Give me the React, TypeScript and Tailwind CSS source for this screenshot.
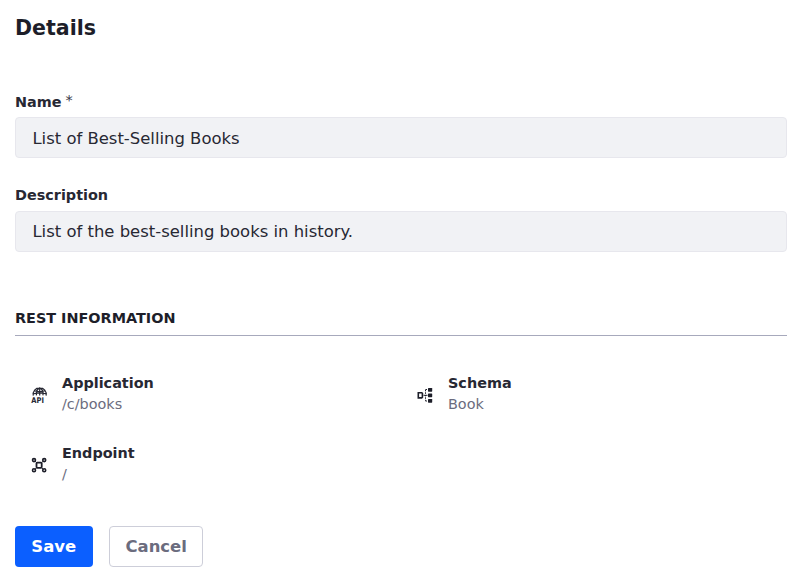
import type { ReactNode } from "react";

function ApiIcon() {
  return (
    <svg width="17" height="17" viewBox="0 0 17 17" fill="none" stroke="#272833" strokeWidth="1.2" className="overflow-visible">
      <path d="M2.300 8.700C1.500 4 4.500 .9 8.700 .9s7.200 3.100 6.400 7.800M8.700 .9v7.500M5.500 8.400C4.800 5 6.500 2 8.700 .9c2.200 1.100 3.900 4.100 3.200 7.500M3.200 3.700c3.500 1.100 7.500 1.100 11 0M2 7c4-1.300 9.400-1.300 13.400 0" />
      <text x="0.300" y="16" fontSize="7.800" fontWeight="700" fontFamily="DejaVu Sans, sans-serif" fill="#272833" stroke="none" textLength="12.600" lengthAdjust="spacingAndGlyphs">API</text>
    </svg>
  );
}

function SchemaIcon() {
  return (
    <svg width="17" height="17" viewBox="0 0 17 17" fill="none" stroke="#1d1e29">
      <path d="M1.300 5.700h3.400l.7.7v3.800l-.7.700H1.300z" strokeWidth="1.600" />
      <path d="M6.500 8.300H11M8.500 2.800v11M8.500 2.500h2.500M8.500 14h2.500" strokeDasharray="1.500 1" strokeWidth="1" />
      <rect x="11" y="0.900" width="4.200" height="3.800" rx="0.600" fill="#1d1e29" stroke="none" />
      <rect x="11" y="6.400" width="4.200" height="3.800" rx="0.600" fill="#1d1e29" stroke="none" />
      <rect x="11" y="11.900" width="4.200" height="3.800" rx="0.600" fill="#1d1e29" stroke="none" />
    </svg>
  );
}

function EndpointIcon() {
  return (
    <svg width="17" height="17" viewBox="0 0 17 17" fill="none" stroke="#1d1e29" strokeWidth="1.600">
      <rect x="5.500" y="5.600" width="5.200" height="5.200" rx="0.700" strokeWidth="1.800" />
      <circle cx="3" cy="3.100" r="1.500" />
      <circle cx="13.200" cy="3.100" r="1.500" />
      <circle cx="3" cy="13.300" r="1.500" />
      <circle cx="13.200" cy="13.300" r="1.500" />
      <path d="M4 4.100l1.600 1.600M12.200 4.100l-1.600 1.600M4 12.300l1.600-1.600M12.200 12.300l-1.600-1.600" strokeWidth="1" />
    </svg>
  );
}

function Field({ label, value, required }: { label: string; value: string; required?: boolean }) {
  return (
    <div>
      <div className={`mb-[5px] flex h-[21px] text-[14.400px] font-bold ${required ? "leading-[22px]" : "leading-[21px]"}`}>
        {label}
        {required && <span className="ml-[4px] text-[14.400px] leading-[18px] font-normal text-[#393a4a]">*</span>}
      </div>
      <div className={`flex h-[41px] items-center rounded-[4px] border border-[#e7e7ed] bg-[#f1f2f5] px-[16.450px] text-[16.450px] ${required ? "pt-[3px]" : "pt-px"}`}>
        {value}
      </div>
    </div>
  );
}

function Info({ icon, title, value }: { icon: ReactNode; title: string; value: string }) {
  return (
    <div className="flex h-[42px] items-center gap-[14px] pl-4">
      <div className="w-[17px] pt-[2px]">{icon}</div>
      <div className="text-[14.400px] leading-[21px]">
        <div className="font-bold">{title}</div>
        <div className="text-[#6b6c7e]">{value}</div>
      </div>
    </div>
  );
}

export default function App() {
  return (
    <main className="h-[586px] w-[800px] bg-white pt-[13px] pr-[13px] pl-[15px] font-['DejaVu_Sans',sans-serif] text-[#272833]">
      <h2 className="h-[78px] text-[20.550px] leading-[30px] font-bold text-[#1d1e29]">Details</h2>
      <div className="flex flex-col gap-[27px]">
        <Field label="Name" value="List of Best-Selling Books" required />
        <Field label="Description" value="List of the best-selling books in history." />
      </div>
      <h3 className="mt-[55px] h-[29px] border-b border-[#a7a9bc] text-[14.400px] leading-[22px] font-bold text-[#1d1e29] uppercase">
        Rest Information
      </h3>
      <div className="mt-[37px] grid grid-cols-2 gap-y-7">
        <Info icon={<ApiIcon />} title="Application" value="/c/books" />
        <Info icon={<SchemaIcon />} title="Schema" value="Book" />
        <Info icon={<EndpointIcon />} title="Endpoint" value="/" />
      </div>
      <div className="mt-[41px] flex gap-[16.450px]">
        <button className="h-[41px] w-[77.500px] rounded-[4px] bg-[#0b5fff] pt-[2px] text-[16.450px] font-bold text-white">Save</button>
        <button className="h-[41px] w-[94.500px] rounded-[4px] border border-[#cdced9] pt-[2px] text-[16.450px] font-bold text-[#6b6c7e]">Cancel</button>
      </div>
    </main>
  );
}
